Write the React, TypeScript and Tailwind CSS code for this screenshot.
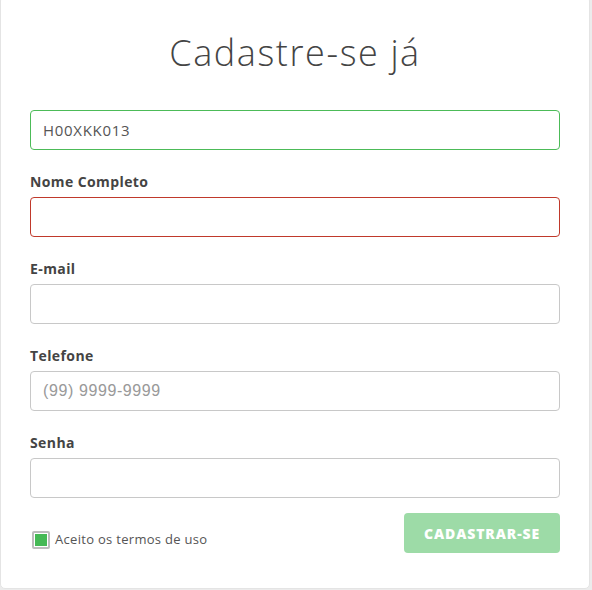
import React from "react";

export default function App() {
  const font = { fontFamily: "'Open Sans', Lato, Arial, sans-serif" };
  return (
    <div className="w-[592px] h-[590px] bg-[#ececec] overflow-hidden" style={font}>
      <div className="w-[590px] h-[593px] -mt-[4px] bg-white rounded-[5px] border border-[#e4e4e4] px-[29px] pt-[4px]">
        <h1 className="text-center text-[36px] font-light text-[#444] tracking-[1.6px] pt-[32px] leading-[40px]">
          Cadastre-se já
        </h1>
        <div className="mt-[37px] h-[40px] rounded-[4px] border border-[#4cbb58] flex items-center px-[12px] text-[15px] tracking-[0.7px] text-[#555]">
          H00XKK013
        </div>
        <div className="mt-[23px] text-[14px] font-bold tracking-[0.4px] text-[#444] leading-[18px]">Nome Completo</div>
        <div className="mt-[6px] h-[40px] rounded-[4px] border border-[#c0392b]" />
        <div className="mt-[23px] text-[14px] font-bold tracking-[0.4px] text-[#444] leading-[18px]">E-mail</div>
        <div className="mt-[6px] h-[40px] rounded-[4px] border border-[#c8c8c8]" />
        <div className="mt-[23px] text-[14px] font-bold tracking-[0.4px] text-[#444] leading-[18px]">Telefone</div>
        <div
          className="mt-[6px] h-[40px] rounded-[4px] border border-[#c8c8c8] flex items-center px-[12px] text-[16px] tracking-[0.6px] text-[#999]"
          style={{ fontFamily: "'Liberation Sans', Arial, sans-serif" }}
        >
          (99) 9999-9999
        </div>
        <div className="mt-[23px] text-[14px] font-bold tracking-[0.4px] text-[#444] leading-[18px]">Senha</div>
        <div className="mt-[6px] h-[40px] rounded-[4px] border border-[#c8c8c8]" />
        <div className="mt-[15px] flex items-start justify-between">
          <label className="flex items-center mt-[17px] ml-[2px] gap-[5px]">
            <span className="w-[18px] h-[18px] border-[2px] border-[#bdbdbd] rounded-[2px] p-[1px] flex">
              <span className="flex-1 bg-[#45b955]" />
            </span>
            <span className="text-[13px] tracking-[0.3px] text-[#555]">Aceito os termos de uso</span>
          </label>
          <button className="w-[156px] h-[40px] rounded-[4px] bg-[#9ddba7] text-white text-[14px] font-extrabold tracking-[0.9px]">
            CADASTRAR-SE
          </button>
        </div>
      </div>
    </div>
  );
}
